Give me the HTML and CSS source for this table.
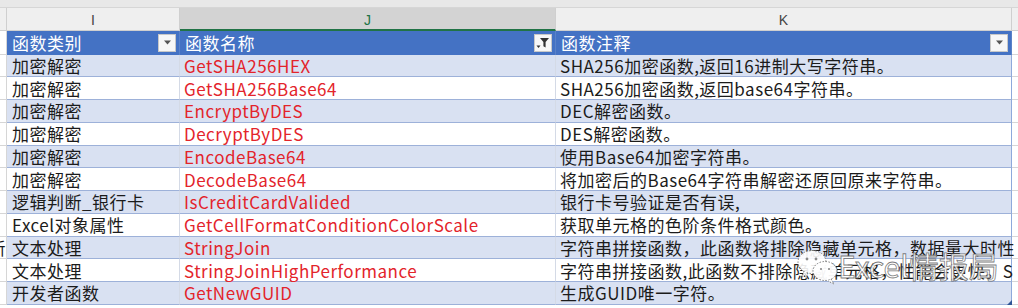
FILE: index.html
```html
<!DOCTYPE html>
<html lang="zh">
<head>
<meta charset="utf-8">
<title>函数列表</title>
<link rel="stylesheet" href="styles.css">
</head>
<body>
<div class="sheet">
  <div class="topstrip"></div>
  <div class="colheads">
    <div class="ch ch-h"></div>
    <div class="ch">I</div>
    <div class="ch ch-sel">J</div>
    <div class="ch">K</div>
    <div class="ch ch-l"></div>
  </div>
  <div class="grid">
    <div class="c edge"></div>
    <div class="c th">函数类别<span class="fbtn"><svg width="9" height="5" viewBox="0 0 9 5"><path d="M1 0.5h7L4.5 4.5z" fill="#555"/></svg></span></div>
    <div class="c th">函数名称<span class="fbtn"><svg width="14" height="12" viewBox="0 0 14 12"><path d="M4 1h9L9.6 5v5.5L7.4 9.2V5z" fill="#333"/><path d="M0.5 8.5h4L2.5 11z" fill="#333"/></svg></span></div>
    <div class="c th">函数注释<span class="fbtn"><svg width="9" height="5" viewBox="0 0 9 5"><path d="M1 0.5h7L4.5 4.5z" fill="#555"/></svg></span></div>
    <div class="c edge r"></div>

    <div class="c edge"></div><div class="c d b">加密解密</div><div class="c d b red">GetSHA256HEX</div><div class="c d b last">SHA256加密函数,返回16进制大写字符串。</div><div class="c edge r"></div>
    <div class="c edge"></div><div class="c d">加密解密</div><div class="c d red">GetSHA256Base64</div><div class="c d last">SHA256加密函数,返回base64字符串。</div><div class="c edge r"></div>
    <div class="c edge"></div><div class="c d b">加密解密</div><div class="c d b red">EncryptByDES</div><div class="c d b last">DEC解密函数。</div><div class="c edge r"></div>
    <div class="c edge"></div><div class="c d">加密解密</div><div class="c d red">DecryptByDES</div><div class="c d last">DES解密函数。</div><div class="c edge r"></div>
    <div class="c edge"></div><div class="c d b">加密解密</div><div class="c d b red">EncodeBase64</div><div class="c d b last">使用Base64加密字符串。</div><div class="c edge r"></div>
    <div class="c edge"></div><div class="c d">加密解密</div><div class="c d red">DecodeBase64</div><div class="c d last">将加密后的Base64字符串解密还原回原来字符串。</div><div class="c edge r"></div>
    <div class="c edge"></div><div class="c d b">逻辑判断_银行卡</div><div class="c d b red">IsCreditCardValided</div><div class="c d b last">银行卡号验证是否有误,</div><div class="c edge r"></div>
    <div class="c edge"></div><div class="c d">Excel对象属性</div><div class="c d red">GetCellFormatConditionColorScale</div><div class="c d last">获取单元格的色阶条件格式颜色。</div><div class="c edge r"></div>
    <div class="c edge ovf"><span>新</span></div><div class="c d b">文本处理</div><div class="c d b red">StringJoin</div><div class="c d b last">字符串拼接函数，此函数将排除隐藏单元格，数据量大时性</div><div class="c edge r"></div>
    <div class="c edge"></div><div class="c d">文本处理</div><div class="c d red">StringJoinHighPerformance</div><div class="c d last">字符串拼接函数,此函数不排除隐藏单元格，性能会更快。S</div><div class="c edge r"></div>
    <div class="c edge"></div><div class="c d b">开发者函数</div><div class="c d b red">GetNewGUID</div><div class="c d b last">生成GUID唯一字符。<span class="handle"></span></div><div class="c edge r"></div>
  </div>
</div>
<div class="watermark">
  <svg class="wm-icon" width="44" height="40" viewBox="0 0 44 40">
    <ellipse cx="16" cy="15" rx="14" ry="11.5" fill="rgba(255,255,255,0.9)" stroke="#7a7a7a" stroke-width="1" stroke-dasharray="1.5 1.5"/>
    <path d="M8 24l-2 6 6-3.5" fill="rgba(255,255,255,0.9)" stroke="#7a7a7a" stroke-width="1" stroke-dasharray="1.5 1.5"/>
    <ellipse cx="29" cy="24" rx="12" ry="9.5" fill="rgba(255,255,255,0.95)" stroke="#7a7a7a" stroke-width="1" stroke-dasharray="1.5 1.5"/>
    <path d="M35 32l3 5-6-3" fill="rgba(255,255,255,0.95)" stroke="#7a7a7a" stroke-width="1" stroke-dasharray="1.5 1.5"/>
    <circle cx="11" cy="12" r="1.4" fill="#8a8a8a"/>
    <circle cx="20" cy="12" r="1.4" fill="#8a8a8a"/>
    <circle cx="25" cy="22" r="1.1" fill="#8a8a8a"/>
    <circle cx="33" cy="22" r="1.1" fill="#8a8a8a"/>
  </svg>
  <span class="wm-text">Excel情报局</span>
</div>
</body>
</html>
```

FILE: styles.css
```css
html, body {
  margin: 0;
  padding: 0;
  background: #ffffff;
}
body {
  width: 1018px;
  height: 308px;
  overflow: hidden;
  position: relative;
  font-family: "Noto Sans CJK SC", "Noto Sans", sans-serif;
}
.sheet {
  display: flex;
  flex-direction: column;
}
.topstrip {
  height: 8px;
  background: #e8e8e8;
  border-bottom: 1px solid #d6d6d6;
  box-sizing: border-box;
}
.colheads {
  display: grid;
  grid-template-columns: 7px 173px 376px 456px 6px;
  height: 23px;
}
.ch {
  box-sizing: border-box;
  background: #efefef;
  border-right: 1px solid #cfcfcf;
  border-bottom: 1px solid #cfcfcf;
  color: #444;
  font-family: "Liberation Sans", "Noto Sans", sans-serif;
  font-size: 14px;
  display: flex;
  align-items: center;
  justify-content: center;
  padding-top: 2px;
}
.ch-sel {
  background: #d3d3d3;
  border-bottom: 2px solid #217346;
  color: #217346;
}
.ch-l {
  border-right: none;
}
.grid {
  display: grid;
  grid-template-columns: 7px 173px 376px 456px 6px;
  grid-template-rows: 23.5px repeat(11, 22.75px) 10px;
}
.c {
  box-sizing: border-box;
  border-bottom: 1px solid #d6d6d6;
  white-space: nowrap;
  font-size: 17px;
  letter-spacing: 0.5px;
  line-height: 21px;
  color: #1b1b1b;
  display: flex;
  align-items: center;
}
.edge {
  border-right: 1px solid #d6d6d6;
}
.edge.r {
  border-right: none;
}
.ovf {
  justify-content: flex-end;
  overflow: hidden;
}
.th {
  background: #4472c4;
  color: #ffffff;
  padding-left: 5px;
  border-bottom: none;
  border-right: 1px solid #5a82c8;
  position: relative;
  justify-content: space-between;
  padding-right: 3px;
}
.fbtn {
  width: 18px;
  height: 18px;
  box-sizing: border-box;
  background: #f7f7f7;
  border: 1px solid #c8c8c8;
  display: flex;
  align-items: center;
  justify-content: center;
}
.d {
  padding-left: 5px;
  border-bottom: 1px solid #9db1d9;
  border-right: 1px solid #d4dae6;
  background: #ffffff;
}
.d.b {
  background: #d9e1f2;
}
.d + .d {
  padding-left: 4px;
}
.d.last {
  border-right: 1px solid #8ea9db;
  position: relative;
}
.red {
  color: #e3242b;
}
.handle {
  position: absolute;
  right: -1px;
  bottom: -1px;
  width: 0;
  height: 0;
  border-left: 5px solid transparent;
  border-bottom: 5px solid #2f5597;
}
.watermark {
  position: absolute;
  left: 796px;
  top: 247px;
  display: flex;
  align-items: center;
  pointer-events: none;
}
.wm-text {
  font-family: "Noto Sans CJK SC", sans-serif;
  font-size: 30px;
  color: rgba(255, 255, 255, 0.85);
  -webkit-text-stroke: 0.8px rgba(100, 100, 100, 0.85);
  margin-top: -4px;
  margin-left: -2px;
}
```
